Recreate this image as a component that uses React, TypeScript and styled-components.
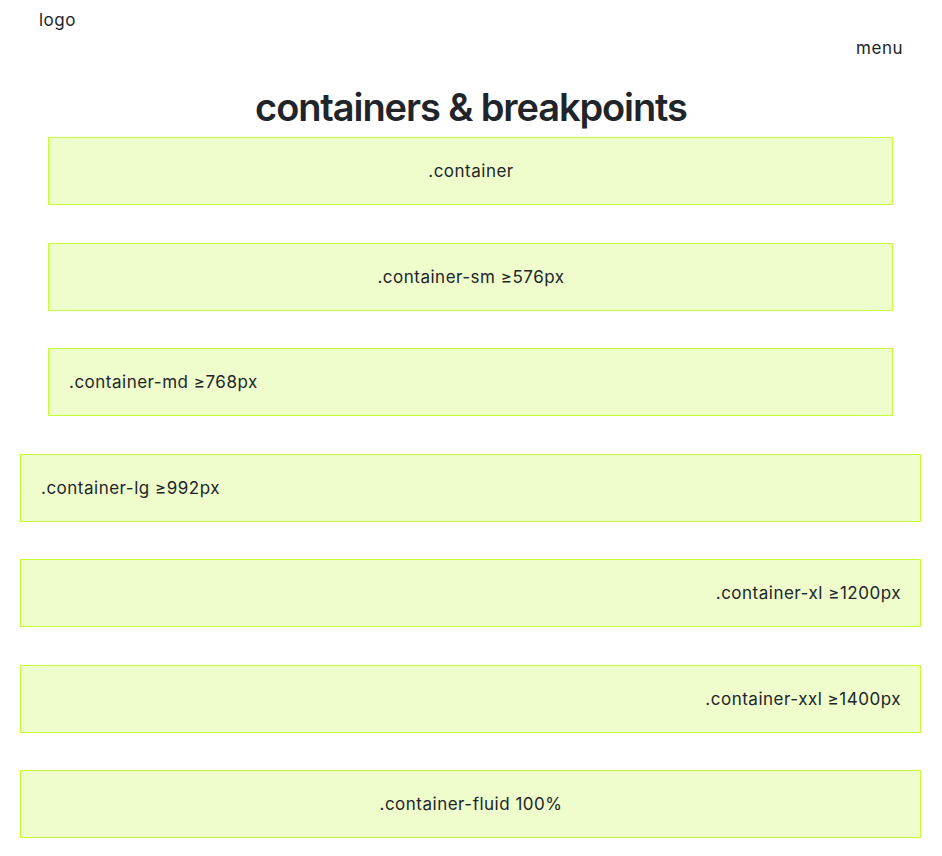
import React from 'react'
import styled, { createGlobalStyle } from 'styled-components'

const GlobalStyle = createGlobalStyle`
  body {
    margin: 0;
    background: #fff;
    font-family: Inter, "Noto Sans", "Liberation Sans", sans-serif;
    color: #212529;
  }
`

type Align = 'left' | 'center' | 'right'

interface IBox {
  label: string
  align: Align
  wide?: boolean
}

const boxes: IBox[] = [
  { label: '.container', align: 'center' },
  { label: '.container-sm ≥576px', align: 'center' },
  { label: '.container-md ≥768px', align: 'left' },
  { label: '.container-lg ≥992px', align: 'left', wide: true },
  { label: '.container-xl ≥1200px', align: 'right', wide: true },
  { label: '.container-xxl ≥1400px', align: 'right', wide: true },
  { label: '.container-fluid 100%', align: 'center', wide: true }
]

const App: React.FC = () => {
  return (
    <Page>
      <GlobalStyle />
      <Header>
        <Logo>logo</Logo>
        <Nav>menu</Nav>
      </Header>
      <Title>containers &amp; breakpoints</Title>
      <List>
        {boxes.map((b) => (
          <Box key={b.label} $align={b.align} $wide={b.wide}>
            {b.label}
          </Box>
        ))}
      </List>
    </Page>
  )
}

const Page = styled.div`
  display: flex;
  flex-direction: column;
  padding-bottom: 18px;
`

const Header = styled.header`
  display: flex;
  flex-direction: column;
  padding: 10px 39px 0;
`

const Logo = styled.div`
  font-size: 17px;
  line-height: 20px;
  letter-spacing: 0.5px;
`

const Nav = styled.nav`
  align-self: flex-end;
  font-size: 17px;
  line-height: 20px;
  letter-spacing: 0.5px;
  margin-top: 8px;
`

const Title = styled.h1`
  margin: 27px 0 8px;
  text-align: center;
  font-size: 38px;
  line-height: 44px;
  font-weight: 600;
  letter-spacing: -1.1px;
`

const List = styled.div`
  display: flex;
  flex-direction: column;
  gap: 37.5px;
`

const Box = styled.div<{ $align: Align; $wide?: boolean }>`
  margin: 0 ${(p) => (p.$wide ? '21px' : '49px')} 0 ${(p) => (p.$wide ? '20px' : '48px')};
  padding: 21px 19px 21px 20px;
  background: #effccb;
  border: 1px solid #c3fb34;
  text-align: ${(p) => p.$align};
  font-size: 17px;
  line-height: 24px;
  letter-spacing: 0.5px;
`

export default App
